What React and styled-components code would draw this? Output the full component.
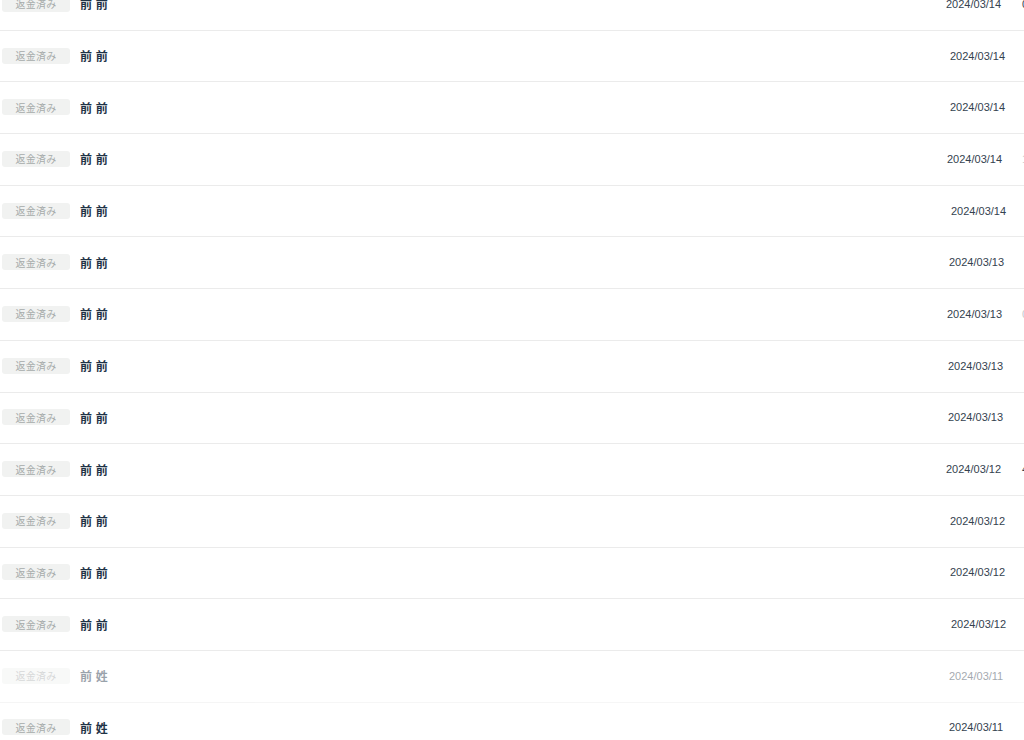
import React from "react";
import styled, { createGlobalStyle } from "styled-components";

const GlobalStyle = createGlobalStyle`
  html, body {
    margin: 0;
    padding: 0;
    background: #fff;
    overflow: hidden;
  }
  body {
    font-family: "Liberation Sans", "Noto Sans CJK JP", sans-serif;
  }
`;

const List = styled.div`
  width: 1024px;
  margin-top: -21px;
`;

const Row = styled.div`
  display: grid;
  grid-template-columns: 80px 1fr 92px 2px;
  align-items: center;
  height: 51.7px;
  padding-bottom: 1px;
  box-sizing: border-box;
  border-bottom: 1px solid #ebebeb;
  opacity: ${(p) => (p.$faded ? 0.45 : 1)};
`;

const Badge = styled.span`
  justify-self: start;
  margin-left: 2px;
  width: 68px;
  height: 16px;
  display: flex;
  align-items: center;
  justify-content: center;
  background: #f1f2f1;
  border-radius: 3px;
  color: #a6abaa;
  font-family: "Noto Sans CJK JP", sans-serif;
  font-size: 10px;
  letter-spacing: 0.2px;
`;

const Name = styled.span`
  font-family: "Noto Sans CJK JP", sans-serif;
  font-size: 12px;
  font-weight: 700;
  color: #1f3346;
  letter-spacing: 0.5px;
`;

const DateCell = styled.span`
  padding-left: ${(p) => p.$offset}px;
  font-size: 11px;
  color: #34424f;
  white-space: nowrap;
`;

const Extra = styled.span`
  font-size: 11px;
  color: ${(p) => (p.$dim ? "#c4c9cd" : "#2f3e4e")};
  white-space: nowrap;
`;

const rows = [
  { name: "前 前", date: "2024/03/14", offset: 16, extra: "0" },
  { name: "前 前", date: "2024/03/14", offset: 20 },
  { name: "前 前", date: "2024/03/14", offset: 20 },
  { name: "前 前", date: "2024/03/14", offset: 17, extra: "1", dim: true },
  { name: "前 前", date: "2024/03/14", offset: 21 },
  { name: "前 前", date: "2024/03/13", offset: 19 },
  { name: "前 前", date: "2024/03/13", offset: 17, extra: "0", dim: true },
  { name: "前 前", date: "2024/03/13", offset: 18 },
  { name: "前 前", date: "2024/03/13", offset: 18 },
  { name: "前 前", date: "2024/03/12", offset: 16, extra: "4" },
  { name: "前 前", date: "2024/03/12", offset: 20 },
  { name: "前 前", date: "2024/03/12", offset: 20 },
  { name: "前 前", date: "2024/03/12", offset: 21 },
  { name: "前 姓", date: "2024/03/11", offset: 19, faded: true },
  { name: "前 姓", date: "2024/03/11", offset: 19 },
];

export default function App() {
  return (
    <>
      <GlobalStyle />
      <List>
        {rows.map((r, i) => (
          <Row key={i} $faded={r.faded}>
            <Badge>返金済み</Badge>
            <Name>{r.name}</Name>
            <DateCell $offset={r.offset}>{r.date}</DateCell>
            <Extra $dim={r.dim}>{r.extra || ""}</Extra>
          </Row>
        ))}
      </List>
    </>
  );
}
